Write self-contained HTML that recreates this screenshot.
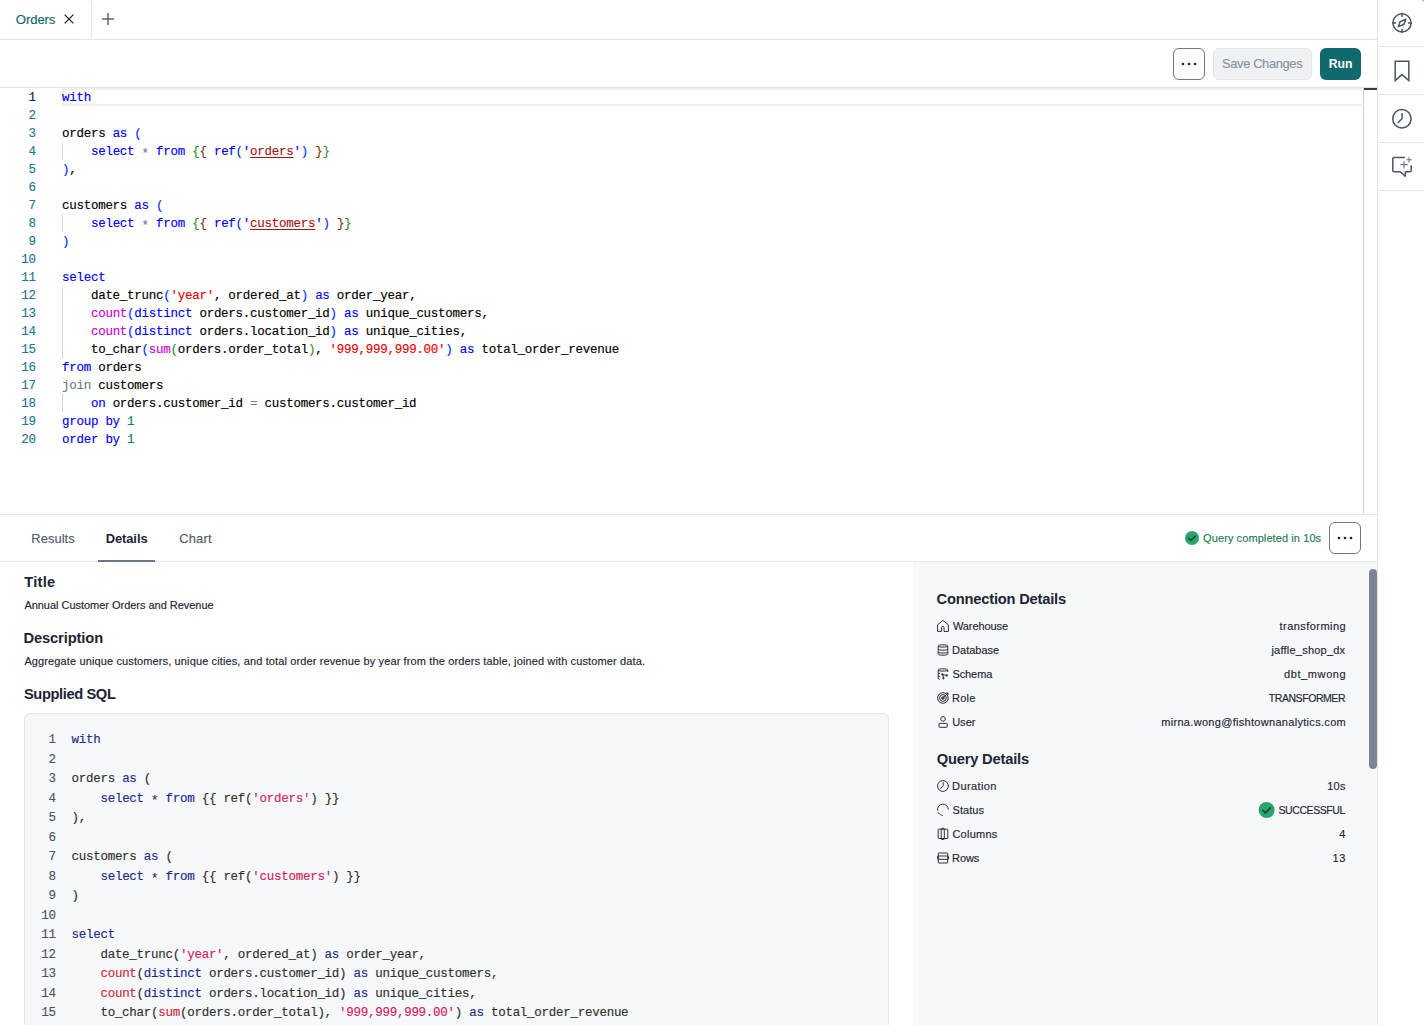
<!DOCTYPE html><html><head><meta charset="utf-8"><title>Orders</title><style>
*{margin:0;padding:0;box-sizing:border-box}
html,body{width:1424px;height:1025px;overflow:hidden;background:#fff;font-family:"Liberation Sans",sans-serif;color:#1d2533}
.t{position:absolute;white-space:pre;-webkit-text-stroke:0.15px currentColor}
.r{position:absolute}
.cl{position:absolute;white-space:pre;font-family:"Liberation Mono",monospace;-webkit-text-stroke:0.15px currentColor}
.k{color:#0000ff}.b1{color:#0431fa}.b2{color:#319331}.b3{color:#7b3814}.s{color:#f00000}.rs{color:#a31515;text-decoration:underline;text-underline-offset:2px}
.a{position:relative;top:2.5px}.p{color:#d000d0}.o{color:#6b7a8a}.n{color:#098658}
.K{color:#1b2a8a}.S{color:#d4205c}.F{color:#d0283c}
svg{position:absolute;overflow:visible}
</style></head><body><div class="r" style="left:0px;top:39px;width:1377px;height:1px;background:#e3e5ea"></div><div class="r" style="left:-6px;top:-1px;width:98px;height:41px;border:1px solid #e3e5ea;border-left:none;border-radius:0 5px 5px 0;background:#fff"></div><div class="t" style="top:11.44px;font-size:13.2px;line-height:17.16px;color:#14696b;letter-spacing:-0.148px;left:15.87px;">Orders</div><svg style="left:0;top:0" width="1" height="1"><path d="M64.6 14.6 L73.4 23.4 M73.4 14.6 L64.6 23.4" stroke="#1d2533" stroke-width="1.3" fill="none"/><path d="M102 19 H114 M108 13 V25" stroke="#5e6673" stroke-width="1.5" fill="none"/></svg><div class="r" style="left:1173px;top:48px;width:32px;height:32px;border:1px solid #6b7789;border-radius:6px"></div><svg style="left:0;top:0" width="1" height="1"><g fill="#1d2533"><circle cx="1183" cy="64" r="1.35"/><circle cx="1189" cy="64" r="1.35"/><circle cx="1195" cy="64" r="1.35"/></g></svg><div class="r" style="left:1213px;top:48px;width:99px;height:32px;background:#f0f1f3;border:1px solid #e3e5e9;border-radius:6px"></div><div class="t" style="top:56.14px;font-size:12.9px;line-height:16.77px;color:#8a93a0;letter-spacing:-0.361px;left:1222.01px;">Save Changes</div><div class="r" style="left:1320px;top:48px;width:41px;height:32px;background:#106a6b;border-radius:6px"></div><div class="t" style="top:57.24px;font-size:12.2px;line-height:15.86px;color:#ffffff;font-weight:700;-webkit-text-stroke:0;letter-spacing:-0.021px;left:1328.68px;">Run</div><div class="r" style="left:0px;top:87px;width:1377px;height:1px;background:#dfe2e6"></div><div class="r" style="left:62px;top:88px;width:1300px;height:18px;border:2px solid #eeeeee;border-right:0"></div><div class="r" style="left:1363px;top:88px;width:1px;height:426px;background:#d4d4d4"></div><div class="r" style="left:1364px;top:88px;width:13px;height:2px;background:#3a3a3a"></div><div class="cl" style="top:88.87px;left:0;width:35.8px;text-align:right;font-size:12.5px;line-height:18px;letter-spacing:-0.27px;color:#0b216f">1</div><div class="cl" style="top:88.87px;left:62px;font-size:12.5px;line-height:18px;letter-spacing:-0.27px;color:#000"><span class="k">with</span></div><div class="cl" style="top:106.87px;left:0;width:35.8px;text-align:right;font-size:12.5px;line-height:18px;letter-spacing:-0.27px;color:#237893">2</div><div class="cl" style="top:124.87px;left:0;width:35.8px;text-align:right;font-size:12.5px;line-height:18px;letter-spacing:-0.27px;color:#237893">3</div><div class="cl" style="top:124.87px;left:62px;font-size:12.5px;line-height:18px;letter-spacing:-0.27px;color:#000">orders <span class="k">as</span> <span class="b1">(</span></div><div class="cl" style="top:142.87px;left:0;width:35.8px;text-align:right;font-size:12.5px;line-height:18px;letter-spacing:-0.27px;color:#237893">4</div><div class="cl" style="top:142.87px;left:62px;font-size:12.5px;line-height:18px;letter-spacing:-0.27px;color:#000">    <span class="k">select</span> <span class="o a">*</span> <span class="k">from</span> <span class="b2">{</span><span class="b3">{</span> <span class="k">ref</span><span class="b1">(</span><span class="k">&#x27;</span><span class="rs">orders</span><span class="k">&#x27;</span><span class="b1">)</span> <span class="b3">}</span><span class="b2">}</span></div><div class="cl" style="top:160.87px;left:0;width:35.8px;text-align:right;font-size:12.5px;line-height:18px;letter-spacing:-0.27px;color:#237893">5</div><div class="cl" style="top:160.87px;left:62px;font-size:12.5px;line-height:18px;letter-spacing:-0.27px;color:#000"><span class="b1">)</span>,</div><div class="cl" style="top:178.87px;left:0;width:35.8px;text-align:right;font-size:12.5px;line-height:18px;letter-spacing:-0.27px;color:#237893">6</div><div class="cl" style="top:196.87px;left:0;width:35.8px;text-align:right;font-size:12.5px;line-height:18px;letter-spacing:-0.27px;color:#237893">7</div><div class="cl" style="top:196.87px;left:62px;font-size:12.5px;line-height:18px;letter-spacing:-0.27px;color:#000">customers <span class="k">as</span> <span class="b1">(</span></div><div class="cl" style="top:214.87px;left:0;width:35.8px;text-align:right;font-size:12.5px;line-height:18px;letter-spacing:-0.27px;color:#237893">8</div><div class="cl" style="top:214.87px;left:62px;font-size:12.5px;line-height:18px;letter-spacing:-0.27px;color:#000">    <span class="k">select</span> <span class="o a">*</span> <span class="k">from</span> <span class="b2">{</span><span class="b3">{</span> <span class="k">ref</span><span class="b1">(</span><span class="k">&#x27;</span><span class="rs">customers</span><span class="k">&#x27;</span><span class="b1">)</span> <span class="b3">}</span><span class="b2">}</span></div><div class="cl" style="top:232.87px;left:0;width:35.8px;text-align:right;font-size:12.5px;line-height:18px;letter-spacing:-0.27px;color:#237893">9</div><div class="cl" style="top:232.87px;left:62px;font-size:12.5px;line-height:18px;letter-spacing:-0.27px;color:#000"><span class="b1">)</span></div><div class="cl" style="top:250.87px;left:0;width:35.8px;text-align:right;font-size:12.5px;line-height:18px;letter-spacing:-0.27px;color:#237893">10</div><div class="cl" style="top:268.87px;left:0;width:35.8px;text-align:right;font-size:12.5px;line-height:18px;letter-spacing:-0.27px;color:#237893">11</div><div class="cl" style="top:268.87px;left:62px;font-size:12.5px;line-height:18px;letter-spacing:-0.27px;color:#000"><span class="k">select</span></div><div class="cl" style="top:286.87px;left:0;width:35.8px;text-align:right;font-size:12.5px;line-height:18px;letter-spacing:-0.27px;color:#237893">12</div><div class="cl" style="top:286.87px;left:62px;font-size:12.5px;line-height:18px;letter-spacing:-0.27px;color:#000">    date_trunc<span class="b1">(</span><span class="s">&#x27;year&#x27;</span>, ordered_at<span class="b1">)</span> <span class="k">as</span> order_year,</div><div class="cl" style="top:304.87px;left:0;width:35.8px;text-align:right;font-size:12.5px;line-height:18px;letter-spacing:-0.27px;color:#237893">13</div><div class="cl" style="top:304.87px;left:62px;font-size:12.5px;line-height:18px;letter-spacing:-0.27px;color:#000">    <span class="p">count</span><span class="b1">(</span><span class="k">distinct</span> orders.customer_id<span class="b1">)</span> <span class="k">as</span> unique_customers,</div><div class="cl" style="top:322.87px;left:0;width:35.8px;text-align:right;font-size:12.5px;line-height:18px;letter-spacing:-0.27px;color:#237893">14</div><div class="cl" style="top:322.87px;left:62px;font-size:12.5px;line-height:18px;letter-spacing:-0.27px;color:#000">    <span class="p">count</span><span class="b1">(</span><span class="k">distinct</span> orders.location_id<span class="b1">)</span> <span class="k">as</span> unique_cities,</div><div class="cl" style="top:340.87px;left:0;width:35.8px;text-align:right;font-size:12.5px;line-height:18px;letter-spacing:-0.27px;color:#237893">15</div><div class="cl" style="top:340.87px;left:62px;font-size:12.5px;line-height:18px;letter-spacing:-0.27px;color:#000">    to_char<span class="b1">(</span><span class="p">sum</span><span class="b2">(</span>orders.order_total<span class="b2">)</span>, <span class="s">&#x27;999,999,999.00&#x27;</span><span class="b1">)</span> <span class="k">as</span> total_order_revenue</div><div class="cl" style="top:358.87px;left:0;width:35.8px;text-align:right;font-size:12.5px;line-height:18px;letter-spacing:-0.27px;color:#237893">16</div><div class="cl" style="top:358.87px;left:62px;font-size:12.5px;line-height:18px;letter-spacing:-0.27px;color:#000"><span class="k">from</span> orders</div><div class="cl" style="top:376.87px;left:0;width:35.8px;text-align:right;font-size:12.5px;line-height:18px;letter-spacing:-0.27px;color:#237893">17</div><div class="cl" style="top:376.87px;left:62px;font-size:12.5px;line-height:18px;letter-spacing:-0.27px;color:#000"><span class="o">join</span> customers</div><div class="cl" style="top:394.87px;left:0;width:35.8px;text-align:right;font-size:12.5px;line-height:18px;letter-spacing:-0.27px;color:#237893">18</div><div class="cl" style="top:394.87px;left:62px;font-size:12.5px;line-height:18px;letter-spacing:-0.27px;color:#000">    <span class="k">on</span> orders.customer_id <span class="o">=</span> customers.customer_id</div><div class="cl" style="top:412.87px;left:0;width:35.8px;text-align:right;font-size:12.5px;line-height:18px;letter-spacing:-0.27px;color:#237893">19</div><div class="cl" style="top:412.87px;left:62px;font-size:12.5px;line-height:18px;letter-spacing:-0.27px;color:#000"><span class="k">group</span> <span class="k">by</span> <span class="n">1</span></div><div class="cl" style="top:430.87px;left:0;width:35.8px;text-align:right;font-size:12.5px;line-height:18px;letter-spacing:-0.27px;color:#237893">20</div><div class="cl" style="top:430.87px;left:62px;font-size:12.5px;line-height:18px;letter-spacing:-0.27px;color:#000"><span class="k">order</span> <span class="k">by</span> <span class="n">1</span></div><div class="r" style="left:62px;top:142px;width:1px;height:18px;background:#d3d3d3"></div><div class="r" style="left:62px;top:214px;width:1px;height:18px;background:#d3d3d3"></div><div class="r" style="left:62px;top:286px;width:1px;height:18px;background:#d3d3d3"></div><div class="r" style="left:62px;top:304px;width:1px;height:18px;background:#d3d3d3"></div><div class="r" style="left:62px;top:322px;width:1px;height:18px;background:#d3d3d3"></div><div class="r" style="left:62px;top:340px;width:1px;height:18px;background:#d3d3d3"></div><div class="r" style="left:62px;top:394px;width:1px;height:18px;background:#d3d3d3"></div><div class="r" style="left:0px;top:514px;width:1377px;height:1px;background:#e3e5ea"></div><div class="t" style="top:530.74px;font-size:12.9px;line-height:16.77px;color:#525c69;letter-spacing:0.052px;left:31.34px;">Results</div><div class="t" style="top:530.74px;font-size:12.9px;line-height:16.77px;color:#1d2533;font-weight:700;-webkit-text-stroke:0;letter-spacing:-0.052px;left:105.64px;">Details</div><div class="t" style="top:530.74px;font-size:12.9px;line-height:16.77px;color:#525c69;letter-spacing:0.226px;left:179.14px;">Chart</div><div class="r" style="left:0px;top:561px;width:1377px;height:1px;background:#e3e5ea"></div><div class="r" style="left:98px;top:560px;width:57px;height:2px;background:#6b7686"></div><svg style="left:0;top:0" width="1" height="1"><circle cx="1192" cy="538" r="7" fill="#27a56c"/><path d="M1188.6 538.2 L1191 540.6 L1195.4 536" stroke="#1f3d33" stroke-width="1.4" fill="none" stroke-linecap="round" stroke-linejoin="round"/></svg><div class="t" style="top:531.04px;font-size:11px;line-height:14.3px;color:#1f7a52;letter-spacing:0.088px;left:1203.08px;">Query completed in 10s</div><div class="r" style="left:1329px;top:522px;width:32px;height:32px;border:1px solid #6b7789;border-radius:6px"></div><svg style="left:0;top:0" width="1" height="1"><g fill="#1d2533"><circle cx="1339" cy="538" r="1.35"/><circle cx="1345" cy="538" r="1.35"/><circle cx="1351" cy="538" r="1.35"/></g></svg><div class="t" style="top:572.85px;font-size:14.7px;line-height:19.11px;color:#1d2533;font-weight:700;-webkit-text-stroke:0;letter-spacing:0.262px;left:24.23px;">Title</div><div class="t" style="top:597.74px;font-size:11px;line-height:14.3px;color:#1d2533;letter-spacing:-0.026px;left:24.38px;">Annual Customer Orders and Revenue</div><div class="t" style="top:628.85px;font-size:14.7px;line-height:19.11px;color:#1d2533;font-weight:700;-webkit-text-stroke:0;letter-spacing:-0.107px;left:23.42px;">Description</div><div class="t" style="top:654.24px;font-size:11px;line-height:14.3px;color:#1d2533;letter-spacing:0.124px;left:24.38px;">Aggregate unique customers, unique cities, and total order revenue by year from the orders table, joined with customer data.</div><div class="t" style="top:684.95px;font-size:14.7px;line-height:19.11px;color:#1d2533;font-weight:700;-webkit-text-stroke:0;letter-spacing:-0.399px;left:23.98px;">Supplied SQL</div><div class="r" style="left:24px;top:713px;width:865px;height:400px;background:#f7f8fa;border:1px solid #e1e4e8;border-radius:6px"></div><div class="cl" style="top:731.12px;left:0;width:55.8px;text-align:right;font-size:12.5px;line-height:19.5px;letter-spacing:-0.27px;color:#4b5563">1</div><div class="cl" style="top:731.12px;left:71.5px;font-size:12.5px;line-height:19.5px;letter-spacing:-0.27px;color:#2f2f2f"><span class="K">with</span></div><div class="cl" style="top:750.62px;left:0;width:55.8px;text-align:right;font-size:12.5px;line-height:19.5px;letter-spacing:-0.27px;color:#4b5563">2</div><div class="cl" style="top:770.12px;left:0;width:55.8px;text-align:right;font-size:12.5px;line-height:19.5px;letter-spacing:-0.27px;color:#4b5563">3</div><div class="cl" style="top:770.12px;left:71.5px;font-size:12.5px;line-height:19.5px;letter-spacing:-0.27px;color:#2f2f2f">orders <span class="K">as</span> (</div><div class="cl" style="top:789.62px;left:0;width:55.8px;text-align:right;font-size:12.5px;line-height:19.5px;letter-spacing:-0.27px;color:#4b5563">4</div><div class="cl" style="top:789.62px;left:71.5px;font-size:12.5px;line-height:19.5px;letter-spacing:-0.27px;color:#2f2f2f">    <span class="K">select</span> <span class="a">*</span> <span class="K">from</span> {{ ref(<span class="S">&#x27;</span><span class="S">orders</span><span class="S">&#x27;</span>) }}</div><div class="cl" style="top:809.12px;left:0;width:55.8px;text-align:right;font-size:12.5px;line-height:19.5px;letter-spacing:-0.27px;color:#4b5563">5</div><div class="cl" style="top:809.12px;left:71.5px;font-size:12.5px;line-height:19.5px;letter-spacing:-0.27px;color:#2f2f2f">),</div><div class="cl" style="top:828.62px;left:0;width:55.8px;text-align:right;font-size:12.5px;line-height:19.5px;letter-spacing:-0.27px;color:#4b5563">6</div><div class="cl" style="top:848.12px;left:0;width:55.8px;text-align:right;font-size:12.5px;line-height:19.5px;letter-spacing:-0.27px;color:#4b5563">7</div><div class="cl" style="top:848.12px;left:71.5px;font-size:12.5px;line-height:19.5px;letter-spacing:-0.27px;color:#2f2f2f">customers <span class="K">as</span> (</div><div class="cl" style="top:867.62px;left:0;width:55.8px;text-align:right;font-size:12.5px;line-height:19.5px;letter-spacing:-0.27px;color:#4b5563">8</div><div class="cl" style="top:867.62px;left:71.5px;font-size:12.5px;line-height:19.5px;letter-spacing:-0.27px;color:#2f2f2f">    <span class="K">select</span> <span class="a">*</span> <span class="K">from</span> {{ ref(<span class="S">&#x27;</span><span class="S">customers</span><span class="S">&#x27;</span>) }}</div><div class="cl" style="top:887.12px;left:0;width:55.8px;text-align:right;font-size:12.5px;line-height:19.5px;letter-spacing:-0.27px;color:#4b5563">9</div><div class="cl" style="top:887.12px;left:71.5px;font-size:12.5px;line-height:19.5px;letter-spacing:-0.27px;color:#2f2f2f">)</div><div class="cl" style="top:906.62px;left:0;width:55.8px;text-align:right;font-size:12.5px;line-height:19.5px;letter-spacing:-0.27px;color:#4b5563">10</div><div class="cl" style="top:926.12px;left:0;width:55.8px;text-align:right;font-size:12.5px;line-height:19.5px;letter-spacing:-0.27px;color:#4b5563">11</div><div class="cl" style="top:926.12px;left:71.5px;font-size:12.5px;line-height:19.5px;letter-spacing:-0.27px;color:#2f2f2f"><span class="K">select</span></div><div class="cl" style="top:945.62px;left:0;width:55.8px;text-align:right;font-size:12.5px;line-height:19.5px;letter-spacing:-0.27px;color:#4b5563">12</div><div class="cl" style="top:945.62px;left:71.5px;font-size:12.5px;line-height:19.5px;letter-spacing:-0.27px;color:#2f2f2f">    date_trunc(<span class="S">&#x27;year&#x27;</span>, ordered_at) <span class="K">as</span> order_year,</div><div class="cl" style="top:965.12px;left:0;width:55.8px;text-align:right;font-size:12.5px;line-height:19.5px;letter-spacing:-0.27px;color:#4b5563">13</div><div class="cl" style="top:965.12px;left:71.5px;font-size:12.5px;line-height:19.5px;letter-spacing:-0.27px;color:#2f2f2f">    <span class="F">count</span>(<span class="K">distinct</span> orders.customer_id) <span class="K">as</span> unique_customers,</div><div class="cl" style="top:984.62px;left:0;width:55.8px;text-align:right;font-size:12.5px;line-height:19.5px;letter-spacing:-0.27px;color:#4b5563">14</div><div class="cl" style="top:984.62px;left:71.5px;font-size:12.5px;line-height:19.5px;letter-spacing:-0.27px;color:#2f2f2f">    <span class="F">count</span>(<span class="K">distinct</span> orders.location_id) <span class="K">as</span> unique_cities,</div><div class="cl" style="top:1004.12px;left:0;width:55.8px;text-align:right;font-size:12.5px;line-height:19.5px;letter-spacing:-0.27px;color:#4b5563">15</div><div class="cl" style="top:1004.12px;left:71.5px;font-size:12.5px;line-height:19.5px;letter-spacing:-0.27px;color:#2f2f2f">    to_char(<span class="F">sum</span>(orders.order_total), <span class="S">&#x27;999,999,999.00&#x27;</span>) <span class="K">as</span> total_order_revenue</div><div class="cl" style="top:1023.62px;left:0;width:55.8px;text-align:right;font-size:12.5px;line-height:19.5px;letter-spacing:-0.27px;color:#4b5563">16</div><div class="cl" style="top:1023.62px;left:71.5px;font-size:12.5px;line-height:19.5px;letter-spacing:-0.27px;color:#2f2f2f"><span class="K">from</span> orders</div><div class="r" style="left:913px;top:562px;width:464px;height:463px;background:#f7f8fa"></div><div class="r" style="left:1369px;top:569px;width:8px;height:200px;background:#7b8594;border-radius:4px"></div><div class="t" style="top:589.95px;font-size:14.7px;line-height:19.11px;color:#1d2533;font-weight:700;-webkit-text-stroke:0;letter-spacing:-0.207px;left:936.6px;">Connection Details</div><div class="t" style="top:749.95px;font-size:14.7px;line-height:19.11px;color:#1d2533;font-weight:700;-webkit-text-stroke:0;letter-spacing:-0.189px;left:936.7px;">Query Details</div><div class="t" style="top:619.24px;font-size:11px;line-height:14.3px;color:#1d2533;letter-spacing:-0.089px;left:952.95px;">Warehouse</div><div class="t" style="top:619.24px;font-size:11px;line-height:14.3px;color:#1d2533;letter-spacing:0.458px;right:77.82999999999993px;text-align:right;">transforming</div><div class="t" style="top:643.24px;font-size:11px;line-height:14.3px;color:#1d2533;letter-spacing:0.0px;left:952.1px;">Database</div><div class="t" style="top:643.24px;font-size:11px;line-height:14.3px;color:#1d2533;letter-spacing:0.224px;right:78.66000000000008px;text-align:right;">jaffle_shop_dx</div><div class="t" style="top:667.24px;font-size:11px;line-height:14.3px;color:#1d2533;letter-spacing:-0.111px;left:952.5px;">Schema</div><div class="t" style="top:667.24px;font-size:11px;line-height:14.3px;color:#1d2533;letter-spacing:0.6px;right:77.69000000000005px;text-align:right;">dbt_mwong</div><div class="t" style="top:691.24px;font-size:11px;line-height:14.3px;color:#1d2533;letter-spacing:0.189px;left:952.1px;">Role</div><div class="t" style="top:691.73px;font-size:10.5px;line-height:13.65px;color:#1d2533;letter-spacing:-0.436px;right:78.95000000000005px;text-align:right;">TRANSFORMER</div><div class="t" style="top:715.24px;font-size:11px;line-height:14.3px;color:#1d2533;letter-spacing:0.036px;left:952.15px;">User</div><div class="t" style="top:715.24px;font-size:11px;line-height:14.3px;color:#1d2533;letter-spacing:0.305px;right:77.97000000000003px;text-align:right;">mirna.wong@fishtownanalytics.com</div><div class="t" style="top:779.04px;font-size:11px;line-height:14.3px;color:#1d2533;letter-spacing:0.377px;left:952.1px;">Duration</div><div class="t" style="top:779.04px;font-size:11px;line-height:14.3px;color:#1d2533;letter-spacing:0.25px;right:78.34999999999991px;text-align:right;">10s</div><div class="t" style="top:803.04px;font-size:11px;line-height:14.3px;color:#1d2533;letter-spacing:0.042px;left:952.5px;">Status</div><div class="t" style="top:803.53px;font-size:10.5px;line-height:13.65px;color:#1d2533;letter-spacing:-0.419px;right:79.06999999999994px;text-align:right;">SUCCESSFUL</div><div class="t" style="top:827.04px;font-size:11px;line-height:14.3px;color:#1d2533;letter-spacing:0.242px;left:952.44px;">Columns</div><div class="t" style="top:827.04px;font-size:11px;line-height:14.3px;color:#1d2533;letter-spacing:0.857px;right:77.81999999999994px;text-align:right;">4</div><div class="t" style="top:851.04px;font-size:11px;line-height:14.3px;color:#1d2533;letter-spacing:-0.102px;left:952.1px;">Rows</div><div class="t" style="top:851.04px;font-size:11px;line-height:14.3px;color:#1d2533;letter-spacing:0.686px;right:77.82999999999993px;text-align:right;">13</div><svg style="left:0;top:0" width="1" height="1"><circle cx="1266.6" cy="810" r="8" fill="#27a56c"/><path d="M1262.8 810.2 L1265.5 812.9 L1270.4 807.8" stroke="#1f3d33" stroke-width="1.5" fill="none" stroke-linecap="round" stroke-linejoin="round"/></svg><svg style="left:937px;top:620.0px" width="12" height="12" viewBox="0 0 12 12" fill="none" stroke="#2b313b" stroke-width="1"><path d="M0.6 11.4 V4.8 L5.8 0.4 L11.4 4.8 V11.4 H7 V7.6 A1.2 1.2 0 0 0 4.6 7.6 V11.4 Z" stroke-linejoin="round"/></svg><svg style="left:937px;top:644.0px" width="12" height="12" viewBox="0 0 12 12" fill="none" stroke="#2b313b" stroke-width="1"><path d="M1.2 2 C1.2 0.4 10.8 0.4 10.8 2 V10 C10.8 11.6 1.2 11.6 1.2 10 Z M1.2 2 C1.2 3.5 10.8 3.5 10.8 2 M1.2 5.1 C1.2 6.5 10.8 6.5 10.8 5.1 M1.2 8 C1.2 9.4 10.8 9.4 10.8 8"/></svg><svg style="left:937px;top:668.0px" width="12" height="12" viewBox="0 0 12 12" fill="none" stroke="#2b313b" stroke-width="1"><path d="M1.2 2 C1.2 0.4 10.8 0.4 10.8 2 V4 M1.2 2 C1.2 3.5 10.8 3.5 10.8 2 M1.2 2 V10 C1.2 11 2 11.3 3 11.5 M1.2 5.3 H3 M1.2 8.3 H3 M5.3 6.5 L9.6 7.4 M6 7 L6.4 10.3"/><g fill="#2b313b" stroke="none"><circle cx="5.3" cy="6.4" r="1.1"/><circle cx="9.8" cy="7.4" r="1.1"/><circle cx="6.4" cy="10.3" r="1.1"/></g></svg><svg style="left:937px;top:692.0px" width="12" height="12" viewBox="0 0 12 12" fill="none" stroke="#2b313b" stroke-width="1"><circle cx="5.9" cy="6" r="5.3"/><circle cx="5.9" cy="6" r="3.4"/><circle cx="5.9" cy="6" r="1.3" fill="#777"/><path d="M5.9 6 L10.6 1.3 M9 1 H11 V3"/></svg><svg style="left:937px;top:716.0px" width="12" height="12" viewBox="0 0 12 12" fill="none" stroke="#2b313b" stroke-width="1"><circle cx="6" cy="2.9" r="2.3"/><rect x="2" y="7.4" width="8.2" height="3.9" rx="0.6"/></svg><svg style="left:937px;top:779.8px" width="12" height="12" viewBox="0 0 12 12" fill="none" stroke="#2b313b" stroke-width="1"><circle cx="5.9" cy="6" r="5.4"/><path d="M6.2 2.6 V5.8 L3.6 8.6" stroke-linecap="round"/></svg><svg style="left:937px;top:803.8px" width="12" height="12" viewBox="0 0 12 12" fill="none" stroke="#2b313b" stroke-width="1"><path d="M0.6 6.6 A5.4 5.4 0 1 1 11.3 5.6" /><path d="M1.3 8.6 L2.4 10 M3.6 10.8 L4.4 11.2" stroke-linecap="round"/><circle cx="5.6" cy="11.4" r="0.5" fill="#2b313b" stroke="none"/></svg><svg style="left:937px;top:827.8px" width="12" height="12" viewBox="0 0 12 12" fill="none" stroke="#2b313b" stroke-width="1"><rect x="1.2" y="1.2" width="9.6" height="9.3" rx="0.5"/><rect x="4.2" y="0.4" width="3.1" height="11" rx="0.5"/></svg><svg style="left:937px;top:851.8px" width="12" height="12" viewBox="0 0 12 12" fill="none" stroke="#2b313b" stroke-width="1"><rect x="1.3" y="1" width="9.4" height="10" rx="0.5"/><rect x="0.5" y="4" width="11" height="3.3" rx="0.5"/></svg><div class="r" style="left:1377px;top:0px;width:1px;height:1025px;background:#e3e5ea"></div><div class="r" style="left:1378px;top:46px;width:46px;height:1px;background:#e3e5ea"></div><div class="r" style="left:1378px;top:94px;width:46px;height:1px;background:#e3e5ea"></div><div class="r" style="left:1378px;top:142px;width:46px;height:1px;background:#e3e5ea"></div><div class="r" style="left:1378px;top:190px;width:46px;height:1px;background:#e3e5ea"></div><svg style="left:0;top:0" width="1" height="1" fill="none" stroke="#4b5563" stroke-width="1.5"><circle cx="1402" cy="22.9" r="9.1"/><path d="M1402 12.8 V17 M1402 28.8 V33 M1392 22.9 H1396 M1408 22.9 H1412"/><path d="M1398.4 26.6 L1400.2 21.6 L1405.8 19.2 L1404 24.3 Z" stroke-linejoin="round"/><path d="M1395.2 61.2 H1408.8 V80.6 L1402 74.6 L1395.2 80.6 Z" stroke-linejoin="miter"/><circle cx="1401.9" cy="118.8" r="9.2"/><path d="M1402 113 V118.8 L1397.7 123" /><path d="M1404.4 157.6 H1394 Q1392.8 157.6 1392.8 158.8 V170.5 Q1392.8 171.7 1394 171.7 H1400.3 L1405.2 176.3 L1405.5 171.7 H1410 Q1411.2 171.7 1411.2 170.5 V165.7" stroke-linejoin="round" stroke-linecap="round"/><path d="M1404 161 V168.2 M1400.4 164.6 H1407.6 M1409 157.2 V162.4 M1406.4 159.8 H1411.6" stroke-width="1.1" stroke="#6b7380"/></svg><div class="r" style="left:1421px;top:-3px;width:6px;height:5px;border-radius:50%;background:radial-gradient(circle at 60% 40%, #9fc27f 0, #a7bf8f 35%, rgba(160,160,170,.5) 60%, rgba(255,255,255,0) 75%)"></div></body></html>
